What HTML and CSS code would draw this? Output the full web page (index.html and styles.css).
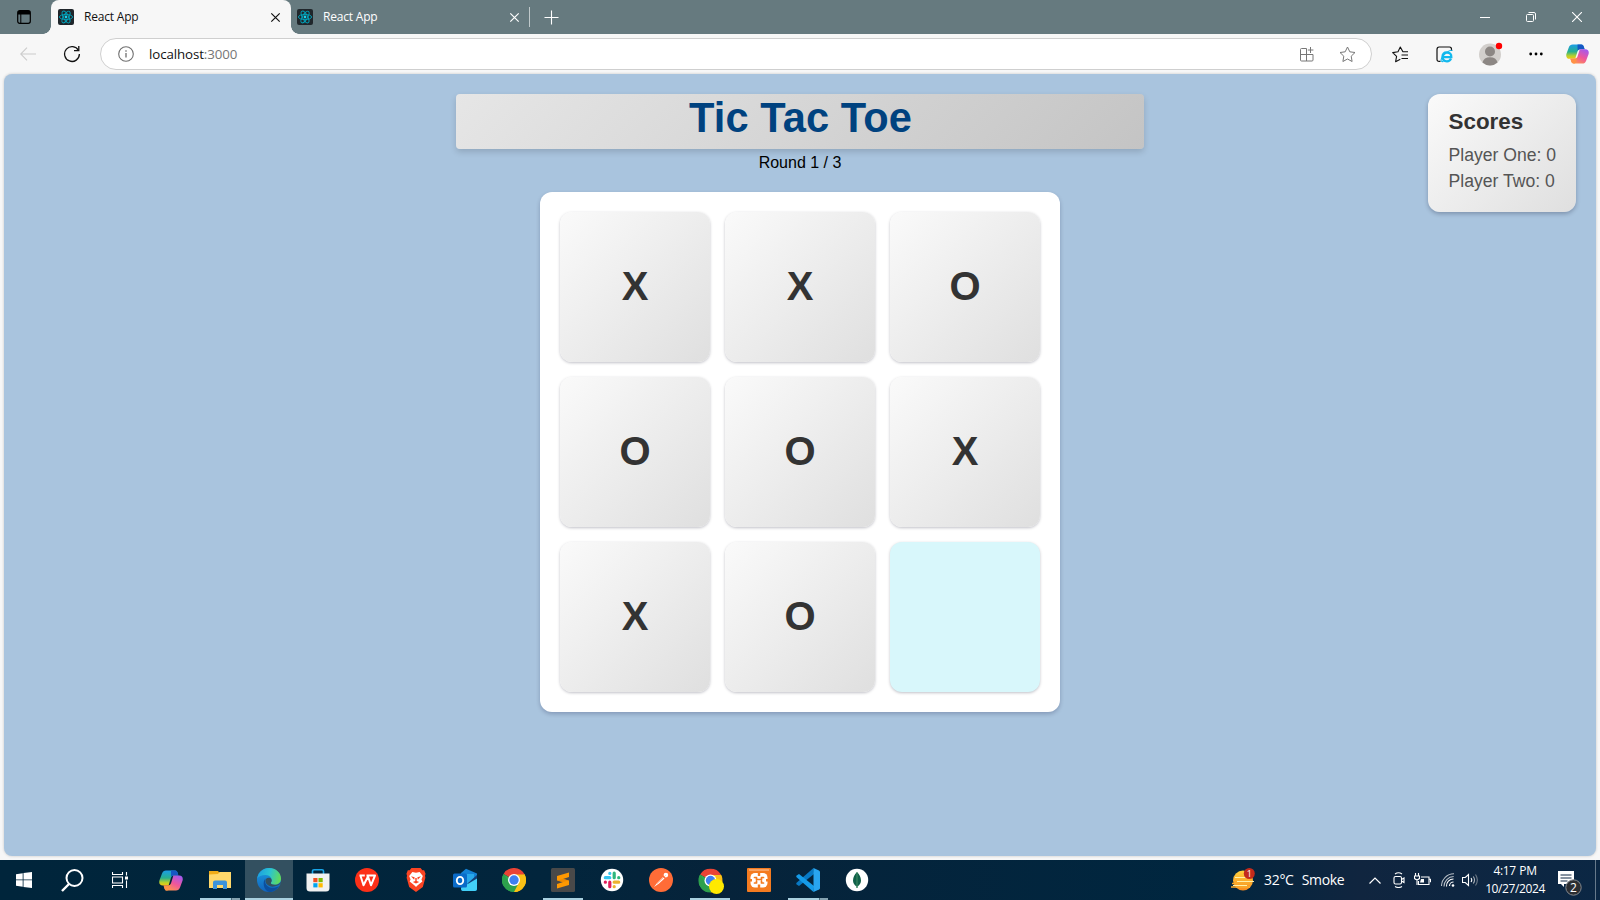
FILE: index.html
```html
<!DOCTYPE html>
<html lang="en">
<head>
<meta charset="utf-8">
<title>React App</title>
<link rel="stylesheet" href="styles.css">
</head>
<body>
<svg class="defs" aria-hidden="true">
  <defs>
    <linearGradient id="cpA" x1="0" y1="0" x2="0" y2="1"><stop offset="0" stop-color="#1b9de8"/><stop offset=".5" stop-color="#27b08f"/><stop offset=".8" stop-color="#b8d02c"/><stop offset="1" stop-color="#f2c811"/></linearGradient>
    <linearGradient id="cpB" x1=".8" y1="0" x2=".2" y2="1"><stop offset="0" stop-color="#a259f0"/><stop offset=".5" stop-color="#f0569a"/><stop offset="1" stop-color="#ff9a4a"/></linearGradient>
    <linearGradient id="edA" x1="0" y1=".3" x2="1" y2=".5"><stop offset="0" stop-color="#1c9fe0"/><stop offset=".5" stop-color="#2bc3d2"/><stop offset="1" stop-color="#62dc57"/></linearGradient>
    <linearGradient id="edB" x1="0" y1="0" x2="0" y2="1"><stop offset="0" stop-color="#1b9de2"/><stop offset="1" stop-color="#1163bb"/></linearGradient>
    <linearGradient id="sun" x1="0" y1="0" x2="0" y2="1"><stop offset="0" stop-color="#ffd23c"/><stop offset="1" stop-color="#f78b1f"/></linearGradient>
  </defs>
  <symbol id="react" viewBox="0 0 16 16">
    <rect width="16" height="16" rx="2" fill="#20262b"/>
    <g fill="none" stroke="#00a4bc" stroke-width=".9">
      <ellipse cx="8" cy="8" rx="6.600" ry="2.600"/>
      <ellipse cx="8" cy="8" rx="6.600" ry="2.600" transform="rotate(60 8 8)"/>
      <ellipse cx="8" cy="8" rx="6.600" ry="2.600" transform="rotate(120 8 8)"/>
    </g>
    <circle cx="8" cy="8" r="1.400" fill="#19d3ee"/>
  </symbol>
  <symbol id="copilot" viewBox="0 0 24 24">
    <path d="M7 2h9c1.600 0 2.200 1 2.700 2.600L19.400 7H15c-1.800 0-2.600 1-3.100 2.600L9.600 17H3.800C.8 17-.2 14.800.4 12L3 5c.8-2 2-3 4-3z" fill="url(#cpA)"/>
    <path d="M12 2h4c1.600 0 2.200 1 2.700 2.600L19.400 7H15c-1.500 0-2.300.6-2.900 1.800z" fill="#1557c4"/>
    <path d="M17 22H8c-1.600 0-2.200-1-2.700-2.600L4.600 17H9c1.800 0 2.600-1 3.100-2.600L14.400 7h5.800c3 0 4 2.200 3.400 5L21 19c-.8 2-2 3-4 3z" fill="url(#cpB)"/>
    <path d="M4.600 17H9c1.500 0 2.300-.6 2.900-1.800L11 19c-.5 2-1.400 3-3 3-1.600 0-2.200-1-2.700-2.600z" fill="#ff9147"/>
  </symbol>
  <symbol id="chrome" viewBox="0 0 24 24">
    <path d="M12 12 1.600 6A12 12 0 0 1 22.400 6z" fill="#ea4335"/>
    <path d="M12 12 22.400 6A12 12 0 0 1 12 24z" fill="#fbbc04"/>
    <path d="M12 12V24A12 12 0 0 1 1.600 6z" fill="#34a853"/>
    <path d="M12 6.500h10.600A12 12 0 0 1 12 24l4.800-9.200z" fill="#fbc116"/>
    <path d="M7.200 14.700 1.600 6A12 12 0 0 0 12 24l4.800-9.200z" fill="#2da04c"/>
    <circle cx="12" cy="12" r="6" fill="#fff"/><circle cx="12" cy="12" r="4.700" fill="#3f7ff0"/>
  </symbol>
  <symbol id="close" viewBox="0 0 11 11"><path d="M1.300 1.300l8.400 8.400M9.700 1.300l-8.400 8.400" fill="none" stroke="currentColor" stroke-width="1.200"/></symbol>
</svg>

<header class="tabstrip">
  <div class="tab-menu"><svg width="14" height="14" viewBox="0 0 14 14"><rect x=".7" y=".7" width="12.600" height="12.600" rx="2" fill="none" stroke="#000" stroke-width="1.200"/><path d="M1 1h12v3.500H1z"/><path d="M3.800 4v9" stroke="#000"/></svg></div>
  <div class="tab tab-active">
    <svg class="favicon"><use href="#react"/></svg><span class="tab-title">React App</span><svg class="tab-close"><use href="#close"/></svg>
  </div>
  <div class="tab">
    <svg class="favicon"><use href="#react"/></svg><span class="tab-title">React App</span><svg class="tab-close"><use href="#close"/></svg>
  </div>
  <div class="tab-divider"></div>
  <svg class="new-tab" viewBox="0 0 15 15"><path d="M7.500.5v14M.5 7.500h14" stroke="#fff" stroke-width="1.100"/></svg>
  <div class="window-controls">
    <span><svg width="10" height="10" viewBox="0 0 10 10"><path d="M0 5.500h10" stroke="#fff"/></svg></span>
    <span><svg width="10" height="10" viewBox="0 0 10 10" fill="none" stroke="#fff"><rect x=".5" y="2.500" width="7" height="7" rx="1"/><path d="M2.500.5H8q1.500 0 1.500 1.500v5.500"/></svg></span>
    <span><svg width="10" height="10" viewBox="0 0 10 10"><path d="M0 0l10 10M10 0L0 10" stroke="#fff" stroke-width="1.100"/></svg></span>
  </div>
</header>

<nav class="toolbar">
  <svg class="back" width="16" height="14" viewBox="0 0 16 14" fill="none" stroke="#ccc" stroke-width="1.100"><path d="M16 7H.8M7 .6.700 7 7 13.400"/></svg>
  <svg class="reload" width="18" height="18" viewBox="0 0 18 18" fill="none" stroke="#111" stroke-width="1.300"><path d="M15.500 5.500A7.400 7.400 0 1 0 16.400 9"/><path d="M15.800 1v4.700H11"/></svg>
  <div class="address">
    <svg width="16" height="16" viewBox="0 0 16 16" fill="none" stroke="#6f6f6f"><circle cx="8" cy="8" r="7.300" stroke-width="1.100"/><path d="M8 7v4.500M8 4.300v1.400" stroke-width="1.300"/></svg>
    <span class="url">localhost<span class="port">:3000</span></span>
    <svg class="apps" width="15" height="15" viewBox="0 0 15 15" fill="none" stroke="#777"><path d="M7.500 1.500h-5q-1 0-1 1v10.500q0 1 1 1h10.500q1 0 1-1V7.500H1.500M7.500 1.500V14M11.500 0v6M8.800 3h5.600"/></svg>
    <svg class="star" width="17" height="17" viewBox="0 0 17 17" fill="none" stroke="#777" stroke-linejoin="round"><path d="m8.500 1 2.300 4.800 5.200.7-3.800 3.700.9 5.300-4.600-2.500-4.600 2.500.9-5.300L1 6.500l5.200-.7z"/></svg>
  </div>
  <div class="tools">
    <span><svg width="17" height="17" viewBox="0 0 17 17" fill="none" stroke="#111" stroke-width="1.100" stroke-linejoin="round"><path d="M16 5.700h-5.100L8.300 1 6 5.800l-5.300.8 3.900 3.800-1 5.300 4.700-2.500M9.500 9H16M9.500 12.500H16"/></svg></span>
    <span><svg width="17" height="17" viewBox="0 0 17 17" fill="none"><path d="M4.500 15.400H3.200Q1 15.400 1 13.200V3.400Q1 1 3.200 1h10.300q2 0 2 2.200V5" stroke="#111" stroke-width="1.200"/><path d="M15 12.600q-1.200 2.700-4 2.700-4.500 0-4.500-4.500T11 6.500q4.500.200 4.300 4.600H7.500" stroke="#12b9ee" stroke-width="2.300"/><path d="M16.500 4.600C14 3 6 9 5 14q0 2 2.500 1.500" stroke="#12b9ee" stroke-width="1.100"/></svg></span>
    <span><svg width="24" height="24" viewBox="0 0 24 24"><circle cx="11" cy="12.500" r="11" fill="#d2cfcc"/><circle cx="11" cy="9.500" r="5" fill="#8c8784"/><path d="M3.500 20.500q1.300-5.300 7.500-5.300t7.500 5.300a11 11 0 0 1-15 0z" fill="#8c8784"/><circle cx="20" cy="4" r="3.200" fill="#f00"/></svg></span>
    <span><svg width="14" height="4" viewBox="0 0 14 4"><circle cx="1.700" cy="2" r="1.400"/><circle cx="7" cy="2" r="1.400"/><circle cx="12.300" cy="2" r="1.400"/></svg></span>
    <span><svg width="23" height="24"><use href="#copilot"/></svg></span>
  </div>
</nav>

<div class="viewport">
<main class="page">
  <section class="game">
    <h1 class="title">Tic Tac Toe</h1>
    <p class="round">Round 1 / 3</p>
    <div class="board">
      <div class="square">X</div><div class="square">X</div><div class="square">O</div>
      <div class="square">O</div><div class="square">O</div><div class="square">X</div>
      <div class="square">X</div><div class="square">O</div><div class="square square-hover"></div>
    </div>
  </section>
  <aside class="scores">
    <h2>Scores</h2>
    <p>Player One: 0</p>
    <p>Player Two: 0</p>
  </aside>
</main>
</div>

<footer class="taskbar">
  <div class="apps-row">
    <span class="slot"><svg width="16" height="16" viewBox="0 0 16 16" fill="#fff"><path d="M0 2.200 6.700 1.200V7.500H0zM7.500 1.100 16 0v7.500H7.500zM0 8.300h6.700v6.400L0 13.800zM7.500 8.300H16V16l-8.500-1.100z"/></svg></span>
    <span class="slot"><svg width="23" height="23" viewBox="0 0 23 23" fill="none" stroke="#fff" stroke-width="2"><circle cx="13.500" cy="9" r="8"/><path d="M8 15 1 22" stroke-width="2.400"/></svg></span>
    <span class="slot"><svg width="16" height="16" viewBox="0 0 16 16" fill="none" stroke="#fff" stroke-width="1.100"><path d="M.5 0v2.500h10V0M.5 16v-2.500h10V16M.5 5h10v6H.5zM14.500 0v3.500M14.500 8.500V16"/><path d="M13 4.500h3v3h-3z" fill="#fff" stroke="none"/></svg></span>
  </div>
  <div class="apps-row pinned">
    <span class="slot"><svg width="24" height="25"><use href="#copilot"/></svg></span>
    <span class="slot open stacked"><svg width="22" height="20" viewBox="0 0 22 20"><path d="M0 1h9l1.500 2H22v14H0z" fill="#f0ac18"/><path d="M0 4.500 9 4l1.500-2H22v16H0z" fill="#ffd86b"/><path d="M4 19v-6.500q0-2 2-2h10q2 0 2 2V19h-4v-4H8v4z" fill="#3b93dc"/></svg></span>
    <span class="slot open current"><svg width="24" height="24" viewBox="0 0 24 24"><circle cx="12" cy="12" r="12" fill="url(#edB)"/><path d="M.2 10.500C1.200 4.200 6 0 12 0c7 0 12 5 12 10.500 0 4-3 6.300-6.500 6.300-3 0-4.200-1.200-3.500-2.300C16 12 14 7 8.500 7 4.500 7 1.500 8.500.2 10.500z" fill="url(#edA)"/><path d="M8.700 10.500c-1.800 3.500.3 8.300 5.300 9.200 3 .5 6-.3 8-2-2 4-6 6.300-10 6.300C6.500 22 5 13.500 8.700 10.500z" fill="#0c4f9e"/><path d="M14 14.500c1.500-2 .5-4.300-1.700-4.700-2-.3-3.600.7-3.900 3 .1 3.700 4.400 6.900 9.600 5.500 3-.8 4.500-1.500 6-3.300v-1c-1.500 2-4 2.800-6.500 2.800-3 0-4.200-1.200-3.500-2.300z" fill="#335060"/></svg></span>
    <span class="slot"><svg width="24" height="24" viewBox="0 0 24 24"><path d="M6.500 7V3Q6.500 1.700 8 1.700h8q1.500 0 1.500 1.300v4" fill="none" stroke="#18a5e8" stroke-width="1.600"/><path d="M.5 5.500h23V20q0 3.500-3.500 3.500H4Q.5 23.500.5 20z" fill="#f1f1f1"/><path d="M7.300 10h4.200v4.200H7.300z" fill="#f25022"/><path d="M12.500 10h4.200v4.200h-4.200z" fill="#7fba00"/><path d="M7.300 15.200h4.200v4.200H7.300z" fill="#00a4ef"/><path d="M12.500 15.200h4.200v4.200h-4.200z" fill="#ffb900"/></svg></span>
    <span class="slot"><svg width="24" height="24" viewBox="0 0 24 24"><circle cx="12" cy="12" r="12" fill="#fc3018"/><path d="M4.500 7.500h5.300M5.500 7.800l3 9.500L13 8.500l3 8.800 4-9.800h-8.500" fill="none" stroke="#fff" stroke-width="2" stroke-linejoin="round"/></svg></span>
    <span class="slot"><svg width="20" height="24" viewBox="0 0 22 24" preserveAspectRatio="none"><path d="M6 0h10l2 2.300 2-.1 1.500 3.500-.6 2 .4 2L18.500 19 11 24 3.500 19 .700 9.700l.4-2-.6-2L2 2.200l2 .1z" fill="#fb4423"/><path d="m7 4 4 .7L15 4l3.500 4-1.500 3.500 1 2-3.500 2.500-2.500 2-1 1-1-1L7.500 16 4 13.500l1-2L3.500 8z" fill="#fff"/><path d="M5.500 8.200l4 1-.5 2.600zM16.500 8.200l-4 1 .5 2.600zM7.500 14l2.700-1v-3h1.600v3l2.700 1-3.500 1.600z" fill="#fb4423"/></svg></span>
    <span class="slot"><svg width="24" height="24" viewBox="0 0 24 24"><path d="m8 5 5-4.300L24 5.500V20q0 3-3 3H10q-2 0-2-3z" fill="#1382d6"/><path d="M10 6h11v9H10z" fill="#28a8ea"/><path d="m24 7-9 8v3h9z" fill="#123f78"/><path d="m8 20 16-9.500V21q0 2-2 2H10q-2 0-2-3z" fill="#42d0f7"/><rect y="5.500" width="14" height="14" rx="1.500" fill="#0a6bc8"/><ellipse cx="7" cy="12.500" rx="3.200" ry="3.600" fill="none" stroke="#fff" stroke-width="1.900"/></svg></span>
    <span class="slot"><svg width="24" height="24"><use href="#chrome"/></svg></span>
    <span class="slot open"><svg width="24" height="24" viewBox="0 0 24 24"><rect width="24" height="24" rx="1.500" fill="#494949"/><path d="m6 8 12-3.500V9l-6 2 6 1.500V17L6 20.500V16l6-2-6-1.500z" fill="#ff9800"/><path d="m6 12.500 6-1.500 6 1.500-6 1.500z" fill="#f08a00"/></svg></span>
    <span class="slot"><svg width="24" height="24" viewBox="0 0 24 24"><circle cx="12" cy="12" r="11.200" fill="#fff"/><g fill="none" stroke-width="3.200" stroke-linecap="round"><path d="M9.800 9.700H5.300M9.800 5.300v.1" stroke="#36c5f0"/><path d="M14.200 9.700V5.200M18.700 9.700h.1" stroke="#2eb67d"/><path d="M14.200 14.200h4.500M14.200 18.600v.1" stroke="#ecb22e"/><path d="M9.800 14.200v4.500M5.400 14.200h-.1" stroke="#e01e5a"/></g></svg></span>
    <span class="slot"><svg width="24" height="24" viewBox="0 0 24 24"><circle cx="12" cy="12" r="12" fill="#ff6c37"/><path d="m5 19 3.500-4.500L14 9l1.500 1.500-5.500 5z" fill="#fff"/><circle cx="16.900" cy="7.100" r="2.300" fill="#fff"/><path d="m8 15.500 8.500-8" stroke="#ff6c37" stroke-width=".6"/></svg></span>
    <span class="slot open"><svg width="27" height="27" viewBox="-1.500 -1.500 27 27"><use href="#chrome" width="24" height="24"/><circle cx="18" cy="18" r="7.500" fill="#ffea00"/></svg></span>
    <span class="slot"><svg width="24" height="24" viewBox="0 0 24 24"><rect width="24" height="24" rx="1" fill="#f47b20"/><path d="M2 2h20" stroke="#fab380" stroke-width="1.400"/><rect x="3.500" y="5" width="17" height="14.500" rx="4.500" fill="#fff"/><path d="M12 4v4M12 16.500v4M3 12.200h2M19 12.200h2" stroke="#f47b20" stroke-width="2.400"/><path d="M7.500 9.500h2v2h5v-2h2M7.500 15h2v-2M16.500 15h-2v-2" fill="none" stroke="#f47b20" stroke-width="1.700" stroke-linecap="round" stroke-linejoin="round"/></svg></span>
    <span class="slot open stacked"><svg width="24" height="24" viewBox="0 0 24 24"><path d="M17.500 0 18 6 3 18 .3 16.300V15z" fill="#0879c4"/><path d="M17.500 24 18 18 3 6 .3 7.700V9z" fill="#159be8"/><path d="m17.500 0 5.500 2.500q1 .5 1 1.500v16q0 1-1 1.500L17.500 24z" fill="#29a5ef"/></svg></span>
    <span class="slot"><svg width="24" height="24" viewBox="0 0 24 24"><circle cx="12" cy="12" r="11.200" fill="#fff"/><path d="M12 4q4 4 4 8.500 0 3.500-3.500 6V20h-1v-1.500q-3.500-2.500-3.500-6Q8 8 12 4z" fill="#116149"/><path d="M12 4v16" stroke="#4c9b6a" stroke-width=".8"/></svg></span>
  </div>
  <div class="tray">
    <svg class="weather-icon" width="25" height="24" viewBox="0 0 25 24"><circle cx="12" cy="12.500" r="10" fill="url(#sun)"/><path d="M4 9.500h14M6 13.500h17M2 17.500h14" stroke="#fff0a8" stroke-width="1.200"/><path d="M0 19h19M1 15.500h20" stroke="#f9a92b" stroke-width="1.400"/><circle cx="18.300" cy="5.500" r="5.500" fill="#c42b1c"/><text class="badge-one" x="18.300" y="9" text-anchor="middle">1</text></svg>
    <span class="weather"><span class="temp">32°C</span><span class="sky">Smoke</span></span>
    <svg class="chevron" width="12" height="7" viewBox="0 0 12 7" fill="none" stroke="#fff" stroke-width="1.200"><path d="m.5 6.500 5.500-5.500 5.500 5.500"/></svg>
    <svg class="meet" width="12" height="16" viewBox="0 0 12 16" fill="none" stroke="#fff" stroke-width="1.100"><rect x="1" y="4.500" width="7.500" height="7.500" rx="1.500"/><path d="m8.500 7.500 2.500-1.500v4.500L8.500 9M2 2q3.500-2.500 7 0M2 14.500q3.500 2 7 0"/></svg>
    <svg class="battery" width="17" height="14" viewBox="0 0 17 14" fill="none" stroke="#fff" stroke-width="1.100"><path d="M7 4h8v7.500H4.500V8M15.500 6.300h1v3M1.500 0v3M4.500 0v3M.5 3h5v2.500q-2.500 2.500-5 0zM3 7v5"/><path d="M7 6h3v3.500H6z" fill="#fff" stroke="none"/></svg>
    <svg class="wifi" width="14" height="14" viewBox="0 0 14 14" fill="none" stroke="#fff" stroke-width="1.100"><path d="M8.500 13a4 4 0 0 1 4-4M5.500 13.500a7 7 0 0 1 7-7.500"/><path d="M3 13.500A10 10 0 0 1 12.700 3.500M.5 13A12.300 12.300 0 0 1 13 .8" stroke="#b7bec6"/><circle cx="12" cy="12.500" r="1.300" fill="#fff" stroke="none"/></svg>
    <svg class="volume" width="17" height="14" viewBox="0 0 17 14" fill="none" stroke="#fff" stroke-width="1.100"><path d="M.5 4.500h2.800L6.500 1.500v11L3.300 9.500H.5zM9 5q1.500 2 0 4"/><path d="M11.300 3.500q2.500 3.500 0 7" stroke="#aab1ba"/><path d="M13.500 1.500q3.700 5.500 0 11" stroke="#6f7b88"/></svg>
    <div class="clock"><span class="time">4:17 PM</span><span class="date">10/27/2024</span></div>
    <svg class="notify" width="25" height="26" viewBox="0 0 25 26"><path d="M0 0h16v13H6v3l-3-3H0z" fill="#fff"/><path d="M2.500 4h11M2.500 7h11M2.500 10h7" stroke="#0e2742" stroke-width="1.100"/><circle cx="15.500" cy="16.500" r="7.700" fill="#2b2d31" stroke="#85898e"/><text class="badge-two" x="15.500" y="21" text-anchor="middle">2</text></svg>
    <div class="peek"></div>
  </div>
</footer>
</body>
</html>
```
FILE: styles.css
```css
* { box-sizing: border-box; }
body {
  margin: 0;
  width: 1600px;
  height: 900px;
  display: flex;
  flex-direction: column;
  overflow: hidden;
  background: #f7f7f7;
  font-family: "Open Sans", "Noto Sans", sans-serif;
}
svg { display: block; flex: none; }
.defs { width: 0; height: 0; }

/* Tab strip */
.tabstrip {
  height: 34px;
  flex: none;
  display: flex;
  align-items: center;
  background: #667a7f;
}
.tab-menu { width: 51px; padding-left: 17px; }
.tab {
  width: 239px;
  height: 34px;
  display: flex;
  align-items: center;
  padding: 0 10px 0 7px;
  color: #fff;
  font-size: 12px;
}
.tab-active {
  width: 240px;
  position: relative;
  background: #f7f7f7;
  color: #111;
  border-radius: 8px 8px 0 0;
}
.tab-active::before, .tab-active::after {
  content: "";
  position: absolute;
  bottom: 0;
  width: 8px;
  height: 8px;
}
.tab-active::before { left: -8px; background: radial-gradient(circle at 0 0, transparent 7.500px, #f7f7f7 8px); }
.tab-active::after { right: -8px; background: radial-gradient(circle at 100% 0, transparent 7.500px, #f7f7f7 8px); }
.favicon { width: 16px; height: 16px; }
.tab:not(.tab-active) .favicon { margin-left: -1px; }
.tab-title { flex: 1; margin-left: 10px; margin-top: -1px; letter-spacing: -0.2px; }
.tab-close { width: 11px; height: 11px; }
.tab-divider { width: 1px; height: 20px; background: #c0c9cb; margin-left: -1px; }
.new-tab { width: 15px; height: 15px; margin-left: 14px; }
.window-controls { margin-left: auto; display: flex; }
.window-controls span { width: 46px; display: flex; justify-content: center; }

/* Toolbar */
.toolbar {
  height: 40px;
  flex: none;
  display: flex;
  align-items: center;
  background: #f7f7f7;
  padding-left: 20px;
}
.back { margin-right: 27px; }
.reload { margin-right: 19px; }
.address {
  width: 1272px;
  height: 32px;
  display: flex;
  align-items: center;
  padding: 0 15px 0 17px;
  background: #fff;
  border: 1px solid #cfcfcf;
  border-radius: 16px;
}
.toolbar .address { width: 1273px; }
.url { flex: 1; margin-left: 15px; font-size: 13.300px; letter-spacing: -0.1px; color: #111; }
.port { color: #767676; }
.apps { margin-right: 25px; }
.tools { display: flex; margin-left: 5px; }
.tools span { width: 46px; height: 24px; display: flex; align-items: center; justify-content: center; }
.tools span:nth-child(2) { margin-left: -2px; }
.tools span:nth-child(3) { margin-left: 1px; }
.tools span:nth-child(4) { margin-left: -1px; }
.tools span:nth-child(5) { margin-left: -5px; }

/* Browser content area */
.viewport { height: 786px; flex: none; padding: 0 4px 4px; }
.page {
  height: 782px;
  display: grid;
  grid-template-columns: 1fr 688px 1fr;
  align-items: start;
  padding-top: 20px;
  background: #a9c4de;
  border-radius: 8px;
  box-shadow: 0 0 3px rgba(0, 0, 0, .2);
  font-family: Arial, "Liberation Sans", sans-serif;
}
.game { grid-column: 2; display: flex; flex-direction: column; align-items: center; }
.title {
  width: 688px;
  height: 55px;
  margin: 0;
  padding-left: 1px;
  text-align: center;
  font-size: 41.600px;
  line-height: 47px;
  letter-spacing: 0.1px;
  color: #00427f;
  background: linear-gradient(135deg, #e6e6e6, #c4c4c4);
  border-radius: 4px;
  box-shadow: 0 3px 6px rgba(0, 0, 0, .15);
}
.round { margin: 5px 0 0; font-size: 16px; line-height: 18px; color: #000; }
.board {
  display: grid;
  grid-template-columns: repeat(3, 150px);
  grid-auto-rows: 150px;
  gap: 15px;
  margin-top: 20px;
  padding: 20px;
  background: #fff;
  border-radius: 12px;
  box-shadow: 0 2px 4px rgba(0, 0, 50, .22);
}
.square {
  display: flex;
  align-items: center;
  justify-content: center;
  font-size: 40px;
  line-height: 44px;
  padding-bottom: 2px;
  font-weight: bold;
  color: #333;
  background: linear-gradient(135deg, #fafafa, #dfdfdf);
  border-radius: 12px;
  box-shadow: 0 1px 3px rgba(0, 0, 30, .25);
}
.square-hover { background: #d8f7fb; }
.scores {
  justify-self: end;
  width: 148px;
  height: 118px;
  margin-right: 20px;
  padding: 15px 0 0 20.500px;
  background: linear-gradient(135deg, #fafafa, #dfdfdf);
  border-radius: 12px;
  box-shadow: 0 2px 4px rgba(0, 0, 30, .25);
  white-space: nowrap;
}
.scores h2 { margin: 0 0 7px; font-size: 22.400px; line-height: 26px; color: #333; }
.scores p { margin: 0; font-size: 17.600px; line-height: 26px; color: #555; }

/* Taskbar */
.taskbar {
  height: 40px;
  flex: none;
  display: flex;
  color: #fff;
  background: linear-gradient(90deg, #00253b 0, #02253c 35%, #06233a 45%, #00263f 75%, #10253f 85%, #0b2744 100%);
}
.apps-row { display: flex; }
.pinned { margin-left: 3px; gap: 1px; }
.slot { width: 48px; height: 40px; display: flex; align-items: center; justify-content: center; position: relative; }
.open::after {
  content: "";
  position: absolute;
  left: 4px;
  right: 4px;
  bottom: 0;
  height: 2px;
  background: #a9d0df;
}
.stacked::after { background: linear-gradient(90deg, #a9d0df 31px, #4a6878 31px, #4a6878 32px, #84a2b0 32px); }
.current { background: #335060; }
.current::after { left: 0; right: 0; }
.tray { flex: 1; display: flex; align-items: center; padding-left: 350px; }
.weather { display: flex; width: 80px; margin-left: 8px; gap: 8px; font-size: 14px; letter-spacing: -0.3px; margin-top: -1px; }
.badge-one { font-size: 9px; fill: #fff; }
.badge-two { font-size: 12px; fill: #fff; }
.chevron { margin-left: 25px; }
.meet { margin-left: 12px; }
.battery { margin-left: 9px; }
.wifi { margin-left: 10px; }
.volume { margin-left: 7px; }
.clock { width: 58px; margin-left: 7px; display: flex; flex-direction: column; align-items: center; font-size: 12px; line-height: 18px; letter-spacing: -0.4px; word-spacing: 1px; white-space: nowrap; }
.notify { margin-left: 14px; margin-top: 8px; }
.peek { width: 1px; height: 40px; background: #66798b; margin-left: auto; margin-right: 4px; }
```
